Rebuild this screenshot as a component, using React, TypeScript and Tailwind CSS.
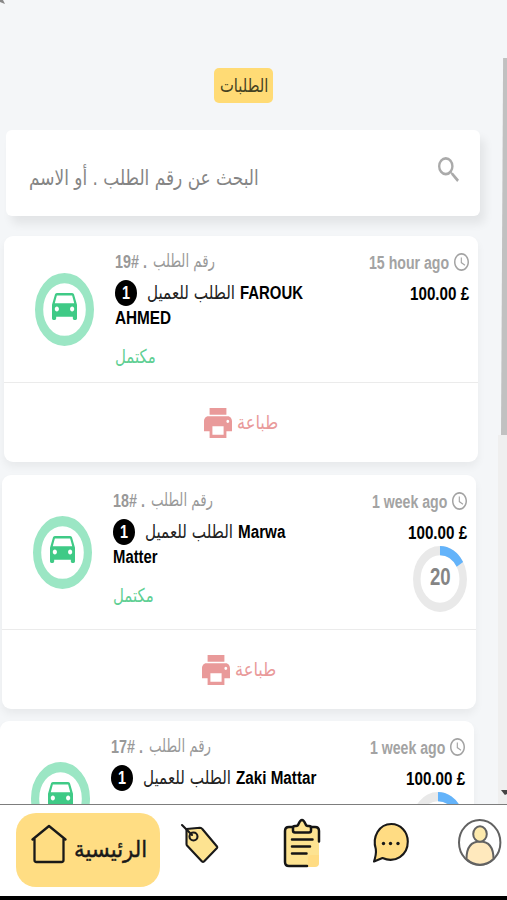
import React, { useLayoutEffect, useRef, useState } from 'react';
import { MdAccessTime, MdDirectionsCar, MdPrint, MdSearch } from 'react-icons/md';

// Condenses a single line of text so that it fills the given width
function Fit({ width, className = '', children }: { width: number; className?: string; children: React.ReactNode }) {
  const ref = useRef<HTMLSpanElement>(null);
  const [scale, setScale] = useState(1);

  useLayoutEffect(() => {
    if (ref.current) setScale(width / ref.current.offsetWidth);
  }, [width]);

  return (
    <span className={`block shrink-0 whitespace-nowrap ${className}`} style={{ width }}>
      <span ref={ref} className="inline-block origin-left" style={{ transform: `scaleX(${scale})` }}>
        {children}
      </span>
    </span>
  );
}

const orders = [
  { id: '19#', time: '15 hour ago', timeWidth: 80, name: 'FAROUK', nameWidth: 63, rest: 'AHMED', restWidth: 56, progress: false, box: 'ml-[4px] h-[226px]', top: 'h-[147px]' },
  { id: '18#', time: '1 week ago', timeWidth: 75, name: 'Marwa', nameWidth: 47, rest: 'Matter', restWidth: 45, progress: true, box: 'ml-[2px] mt-[13px] h-[234px]', top: 'h-[155px]' },
  { id: '17#', time: '1 week ago', timeWidth: 75, name: 'Zaki Mattar', nameWidth: 80, rest: '', restWidth: 0, progress: true, box: 'mt-[12px] h-[234px]', top: 'h-[155px]' },
];

function Progress() {
  return (
    <div className="relative h-[66px] w-[54px]">
      <svg className="h-full w-full" viewBox="0 0 54 54" preserveAspectRatio="none" fill="none" strokeWidth="7.5">
        <circle cx="27" cy="27" r="23.2" stroke="#e9e9e9" />
        <path d="M27 3.8A23.2 23.2 0 0 1 46.9 15.1" stroke="#63b3fa" />
      </svg>
      <div className="absolute inset-0 flex items-center justify-center pb-[4px] text-[23px] font-bold text-[#858585]">
        <Fit width={21}>20</Fit>
      </div>
    </div>
  );
}

function OrderCard({ order }: { order: (typeof orders)[number] }) {
  return (
    <div className={`w-[474px] shrink-0 rounded-[9px] bg-white shadow-[0_5px_9px_rgba(0,0,0,0.05)] ${order.box}`}>
      <div className={`flex border-b border-[#ebebeb] ${order.top}`}>
        <div className="flex w-[111px] items-center pl-[31px]">
          <div className="relative mt-[1px] h-[73px] w-[59px]">
            <svg className="h-full w-full" viewBox="0 0 59 59" preserveAspectRatio="none">
              <circle cx="29.5" cy="29.5" r="25.4" fill="none" stroke="#9be6c4" strokeWidth="8.2" />
            </svg>
            <div className="absolute inset-0 flex items-center justify-center pb-[6px]">
              <MdDirectionsCar className="h-[27px] w-[25px] text-[#3fca86]" viewBox="3 5 18 16" preserveAspectRatio="none" />
            </div>
          </div>
        </div>
        <div className="flex-1 pt-[14px]">
          <div className="flex h-[24px] items-center gap-[6px] text-[#999]">
            <Fit width={32} className="text-[17.5px] font-bold">{order.id} .</Fit>
            <Fit width={62} className="pb-[3px] font-['DejaVu_Sans'] text-[18px]">رقم الطلب</Fit>
          </div>
          <div className="mt-[6px] flex h-[26px] items-center">
            <div className="flex h-[26px] w-[22px] items-center justify-center rounded-[50%] bg-black text-[18px] font-bold text-white">
              <Fit width={8}>1</Fit>
            </div>
            <Fit width={88} className="ml-[10px] pb-[2px] font-['DejaVu_Sans'] text-[19px] text-[#222]">الطلب للعميل</Fit>
            <Fit width={order.nameWidth} className="ml-[5px] text-[17.5px] font-bold text-black">{order.name}</Fit>
          </div>
          <div className="flex h-[25px] items-center text-[17.5px] font-bold text-black">
            {order.rest && <Fit width={order.restWidth}>{order.rest}</Fit>}
          </div>
          <div className="mt-[12px] flex h-[26px] items-center text-[#5fcf93]">
            <Fit width={41} className="font-['DejaVu_Sans'] text-[19px]">مكتمل</Fit>
          </div>
        </div>
        <div className="flex flex-col items-end pt-[14px] pr-[9px]">
          <div className="flex h-[24px] items-center gap-[5px] text-[17.5px] font-bold text-[#a3a3a3]">
            <Fit width={order.timeWidth} className="pt-[2px]">{order.time}</Fit>
            <MdAccessTime className="mb-[1px] h-[18px] w-[15px]" viewBox="2 2 20 20" preserveAspectRatio="none" />
          </div>
          <div className="mt-[6px] flex h-[27px] items-center pt-[1px] text-[17.5px] font-bold text-black">
            <Fit width={59}>100.00 £</Fit>
          </div>
          {order.progress && <Progress />}
        </div>
      </div>
      <div className="flex h-[79px] items-center justify-center gap-[5px] pr-[1px] text-[#e99a9a]">
        <MdPrint className="h-[30px] w-[28px]" viewBox="2 3 20 18" preserveAspectRatio="none" />
        <Fit width={41} className="font-['DejaVu_Sans'] text-[19px]">طباعة</Fit>
      </div>
    </div>
  );
}

function BottomNav() {
  return (
    <nav className="flex h-[96px] items-start border-t border-b-4 border-t-[#7d7d7d] border-b-black bg-white">
      <div className="mt-[8px] ml-[16px] flex h-[74px] w-[144px] shrink-0 items-center rounded-[20px] bg-[#ffdd83] pl-[15px]">
        <svg className="mb-[12px] h-[40px] w-[36px]" viewBox="0 0 36 40" fill="none" stroke="#191919" strokeWidth="2.3" strokeLinecap="round" strokeLinejoin="round">
          <path d="M1.5 15.5 18 2l16.500 13.500M3.500 14.500V36q0 2 2 2h25q2 0 2-2V14.500" />
        </svg>
        <Fit width={73} className="ml-[7px] pb-[3px] font-['DejaVu_Sans'] text-[23px] leading-8 text-[#191919] [-webkit-text-stroke:0.4px_#191919]">الرئيسية</Fit>
      </div>
      <svg className="mt-[18px] ml-[20px] h-[42px] w-[40px] shrink-0" viewBox="0 0 40 42" fill="none" stroke="#191919" strokeWidth="2.1" strokeLinejoin="round" strokeLinecap="round">
        <path d="M6.500 6 20 4.800q1.500 0 2.300 1.200L37 23.500q.6.8 0 1.500L24 38.500q-1 .8-2 0L7 22.500Q6.500 22 6.500 21Z" fill="#fde391" />
        <circle cx="13.500" cy="13.500" r="4" />
        <path d="M2 2 12 12" />
      </svg>
      <svg className="mt-[13px] ml-[63px] h-[52px] w-[38px] shrink-0" viewBox="0 0 38 52" fill="none" stroke="#151515" strokeWidth="2.5" strokeLinecap="round" strokeLinejoin="round">
        <rect x="3" y="9" width="33" height="39" rx="4" fill="#fde391" stroke="none" />
        <path d="M25 40q0-3 3-3h8v8q0 4-4 4h-7Z" fill="#ffdc83" stroke="none" />
        <path d="M10 9H6q-4 0-4 4v31q0 4 4 4h18M28 9h4q4 0 4 4v10.500" />
        <path d="M12 14.500q-2 0-2-2v-2.500q0-2 2-2h1q2 0 2.500-2 3.500-8 7 0 .5 2 2.500 2h1q2 0 2 2v2.500q0 2-2 2Z" fill="#fde391" />
        <path d="M9 21.500h20.500M9 28.500h18M9 35.500h14.500" />
      </svg>
      <svg className="mt-[17px] ml-[50px] h-[42px] w-[38px] shrink-0" viewBox="0 0 38 42" fill="none" stroke="#191919" strokeWidth="2.1" strokeLinejoin="round">
        <path d="M4.800 27C1 15 8 2 20.300 2c9.500 0 16.500 8 16.500 17.500 0 14-12.800 22-25.300 16.500L3 39.500Q5.500 32 4.800 27Z" fill="#ffdc83" />
        <g fill="#191919" stroke="none">
          <circle cx="12.500" cy="21.500" r="1.700" />
          <circle cx="19.500" cy="21.500" r="1.700" />
          <circle cx="27" cy="21.500" r="1.700" />
        </g>
      </svg>
      <svg className="mt-[14px] ml-[48px] h-[48px] w-[45px] shrink-0" viewBox="0 0 45 48" fill="none" stroke="#626262" strokeWidth="2">
        <ellipse cx="22.700" cy="23.500" rx="20.700" ry="22.500" />
        <path d="M9.500 40C9.500 29 14 22.500 23 22.500S36.500 29 36.500 40c-8 7.500-19 7.500-27 0Z" fill="#ffe9bd" />
        <ellipse cx="23" cy="15" rx="6.800" ry="7.700" fill="#fdeaad" />
      </svg>
    </nav>
  );
}

export default function App() {
  return (
    <div className="flex h-[900px] w-[507px] flex-col overflow-hidden bg-[#f4f6f8] font-['Liberation_Sans',sans-serif]">
      <main className="flex h-[804px] shrink-0 overflow-hidden">
        <div className="flex w-[498px] shrink-0 flex-col">
          <div className="h-[68px] shrink-0">
            <div className="h-[4px] w-[5px] bg-[#888] [clip-path:polygon(0_0,60%_0,100%_100%,0_50%)]" />
          </div>
          <div className="ml-[214px] flex h-[35px] w-[59px] shrink-0 items-center justify-center rounded-[5px] bg-[#ffdb75]">
            <Fit width={48} className="pb-[1px] font-['DejaVu_Sans'] text-[19px] text-[#444222]">الطلبات</Fit>
          </div>
          <div className="mt-[27px] ml-[6px] flex h-[86px] w-[474px] shrink-0 items-start justify-between rounded-[6px] bg-white pr-[21px] pl-[23px] shadow-[5px_8px_10px_rgba(0,0,0,0.07)]">
            <Fit width={230} className="mt-[33px] font-['DejaVu_Sans'] text-[21px] text-[#858585]">
              <span dir="rtl">البحث عن رقم الطلب . أو الاسم</span>
            </Fit>
            <MdSearch className="mt-[27px] h-[25px] w-[21px] text-[#aaa]" viewBox="3 3 17.5 17.5" preserveAspectRatio="none" />
          </div>
          <div className="mt-[20px] flex flex-col">
            {orders.map((order) => (
              <OrderCard key={order.id} order={order} />
            ))}
          </div>
        </div>
        <div className="flex w-[9px] flex-col items-end">
          <div className="mt-[58px] h-[377px] w-[6px] shrink-0 bg-[#c1c1c1] [clip-path:polygon(35%_0,100%_0,100%_100%,0_100%)]" />
          <div className="flex w-full flex-1 items-end justify-end bg-[#efefef] pb-[9px]">
            <div className="h-[5px] w-[6px] bg-[#444] [clip-path:polygon(0_0,100%_0,100%_80%,65%_100%)]" />
          </div>
        </div>
      </main>
      <BottomNav />
    </div>
  );
}
